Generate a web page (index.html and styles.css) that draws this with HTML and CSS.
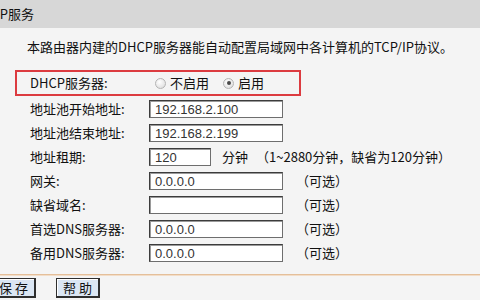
FILE: index.html
```html
<!DOCTYPE html>
<html lang="zh-CN">
  <head>
    <meta charset="UTF-8" />
    <title>DHCP服务</title>
    <link rel="stylesheet" href="styles.css">
  </head>
  <body>
    <div class="title"><span>DHCP服务</span></div>
    <p class="intro">本路由器内建的DHCP服务器能自动配置局域网中各计算机的TCP/IP协议。</p>

    <div class="switch-box">
      <span class="label">DHCP服务器:</span>
      <label class="radio"><span class="dot"></span>不启用</label>
      <label class="radio"><span class="dot on"></span>启用</label>
    </div>

    <div class="form">
      <div class="row">
        <span class="label">地址池开始地址:</span>
        <input class="field" type="text" value="192.168.2.100" />
      </div>
      <div class="row">
        <span class="label">地址池结束地址:</span>
        <input class="field" type="text" value="192.168.2.199" />
      </div>
      <div class="row">
        <span class="label">地址租期:</span>
        <input class="field short" type="text" value="120" />
        <span class="unit">分钟</span>
        <span class="note">（1~2880分钟，缺省为120分钟）</span>
      </div>
      <div class="row">
        <span class="label">网关:</span>
        <input class="field" type="text" value="0.0.0.0" />
        <span class="opt">（可选）</span>
      </div>
      <div class="row">
        <span class="label">缺省域名:</span>
        <input class="field" type="text" value="" />
        <span class="opt">（可选）</span>
      </div>
      <div class="row">
        <span class="label">首选DNS服务器:</span>
        <input class="field" type="text" value="0.0.0.0" />
        <span class="opt">（可选）</span>
      </div>
      <div class="row">
        <span class="label">备用DNS服务器:</span>
        <input class="field" type="text" value="0.0.0.0" />
        <span class="opt">（可选）</span>
      </div>
    </div>

    <div class="rule"></div>

    <div class="buttons">
      <button class="btn first">保 存</button>
      <button class="btn">帮 助</button>
    </div>
  </body>
</html>
```

FILE: styles.css
```css
* {
  margin: 0;
  padding: 0;
  box-sizing: border-box;
}

body {
  width: 480px;
  height: 300px;
  overflow: hidden;
  background: #f4f4f4;
  color: #111;
  font-family: "Noto Sans CJK SC", "Liberation Sans", sans-serif;
  font-size: 13px;
  line-height: 18px;
}

.title {
  height: 28px;
  background: #d7d7d7;
  line-height: 28px;
  overflow: hidden;
  white-space: nowrap;
}

.title span {
  display: inline-block;
  margin-left: -27px;
}

.intro {
  margin: 10px 0 14px;
  padding-left: 27px;
  white-space: nowrap;
}

.switch-box {
  display: flex;
  align-items: center;
  width: 286px;
  height: 26px;
  margin-left: 15px;
  padding-left: 13px;
  border: 2px solid #dc3b40;
}

.switch-box .label {
  width: 125px;
}

.radio {
  display: flex;
  align-items: center;
  margin-right: 14px;
}

.dot {
  width: 11px;
  height: 11px;
  margin-right: 4px;
  border-radius: 50%;
  border: 1px solid #b4b4b4;
  background: radial-gradient(circle at 40% 35%, #ffffff 0%, #e4e4e4 70%, #cfcfcf 100%);
  position: relative;
}

.dot.on::after {
  content: "";
  position: absolute;
  left: 2.5px;
  top: 2.5px;
  width: 4px;
  height: 4px;
  border-radius: 50%;
  background: #4a4a4a;
}

.form {
  margin-top: 1px;
  padding-left: 30px;
}

.row {
  display: flex;
  align-items: center;
  height: 24px;
  white-space: nowrap;
}

.row .label {
  width: 119px;
}

.field {
  width: 134px;
  height: 18px;
  padding: 0 5px;
  border: 1px solid #6e6e6e;
  border-top-color: #3c3c3c;
  border-left-color: #3c3c3c;
  box-shadow: inset 1px 1px 0 #9a9a9a;
  background: #fff;
  color: #333;
  font-family: "Liberation Sans", sans-serif;
  font-size: 13px;
}

.field.short {
  width: 62px;
}

.unit {
  margin-left: 11px;
}

.note {
  margin-left: 8px;
}

.opt {
  margin-left: 13px;
}

.rule {
  height: 2px;
  margin-top: 9px;
  border-top: 1px solid #e4bf9a;
  background: #f2ddc8;
}

.buttons {
  display: flex;
  gap: 20px;
  margin-top: 2px;
}

.btn {
  width: 44px;
  height: 20px;
  background: #dbe6f3;
  border: 1px solid #2e2e2e;
  border-right-width: 2px;
  border-bottom-width: 2px;
  box-shadow: inset 1px 1px 0 #ffffff;
  color: #111;
  font-family: "Noto Sans CJK SC", sans-serif;
  font-size: 13px;
  line-height: 16px;
}

.btn.first {
  margin-left: -8px;
}
```
